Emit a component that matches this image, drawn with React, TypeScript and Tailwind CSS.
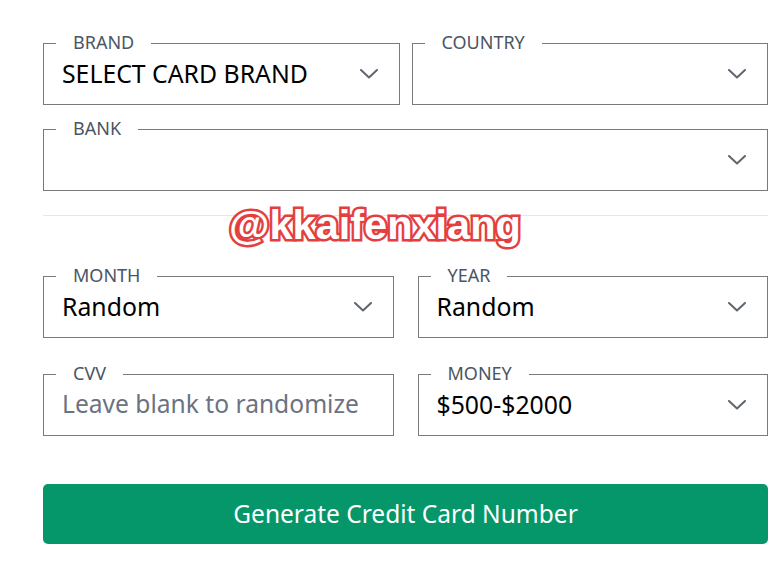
import React from "react";

const font = { fontFamily: "'Noto Sans', 'Open Sans', sans-serif" };

function Chevron() {
    return (
        <svg width="18" height="10" viewBox="0 0 18 10" fill="none" className="shrink-0">
            <polyline points="1,1 9,8.5 17,1" stroke="#5f6670" strokeWidth="2" strokeLinecap="round" strokeLinejoin="round" />
        </svg>
    );
}

function Field({ label, value, placeholder, select = true }: { label: string; value?: string; placeholder?: string; select?: boolean }) {
    return (
        <fieldset className="border border-[#7a7a7a] min-w-0">
            <legend className="ml-[12px] px-[17px] text-[18px] leading-[24px] text-[#4b5563]">
                <span className="relative -top-px">{label}</span>
            </legend>
            <div className="h-[49px] pl-[18px] pr-[21px] pb-[11px] flex items-center justify-between">
                {value ? (
                    <span className="relative -top-px text-[24.8px] leading-[32px] text-black truncate">{value}</span>
                ) : (
                    <span className="relative -top-px text-[24.6px] leading-[32px] text-[#6b7280] truncate">{placeholder}</span>
                )}
                {select && <Chevron />}
            </div>
        </fieldset>
    );
}

export default function App() {
    return (
        <main className="relative bg-white w-[781px] h-[570px] pl-[43px] pr-[13px] pt-[31px]" style={font}>
            <section className="grid grid-cols-2 gap-x-[12px]">
                <Field label="BRAND" value="SELECT CARD BRAND" />
                <Field label="COUNTRY" />
            </section>
            <section className="mt-[12px]">
                <Field label="BANK" />
            </section>

            <hr className="mt-[24px] border-0 border-t border-[#e5e7eb]" />

            <section className="mt-[48px] grid grid-cols-2 gap-x-[24px] gap-y-[24px]">
                <Field label="MONTH" value="Random" />
                <Field label="YEAR" value="Random" />
                <Field label="CVV" placeholder="Leave blank to randomize" select={false} />
                <Field label="MONEY" value="$500-$2000" />
            </section>

            <button className="mt-[48px] w-full h-[60px] rounded-[5px] bg-[#05976a] text-white text-[24.5px] leading-[32px]">
                Generate Credit Card Number
            </button>

            <div
                className="absolute left-[229px] top-[201px] text-[41.5px] leading-[48px] font-bold text-white [-webkit-text-stroke:5px_#e53e3e] [paint-order:stroke_fill]"
                style={{ fontFamily: "'Liberation Sans', Arial, sans-serif" }}
            >
                @kkaifenxiang
            </div>
        </main>
    );
}
